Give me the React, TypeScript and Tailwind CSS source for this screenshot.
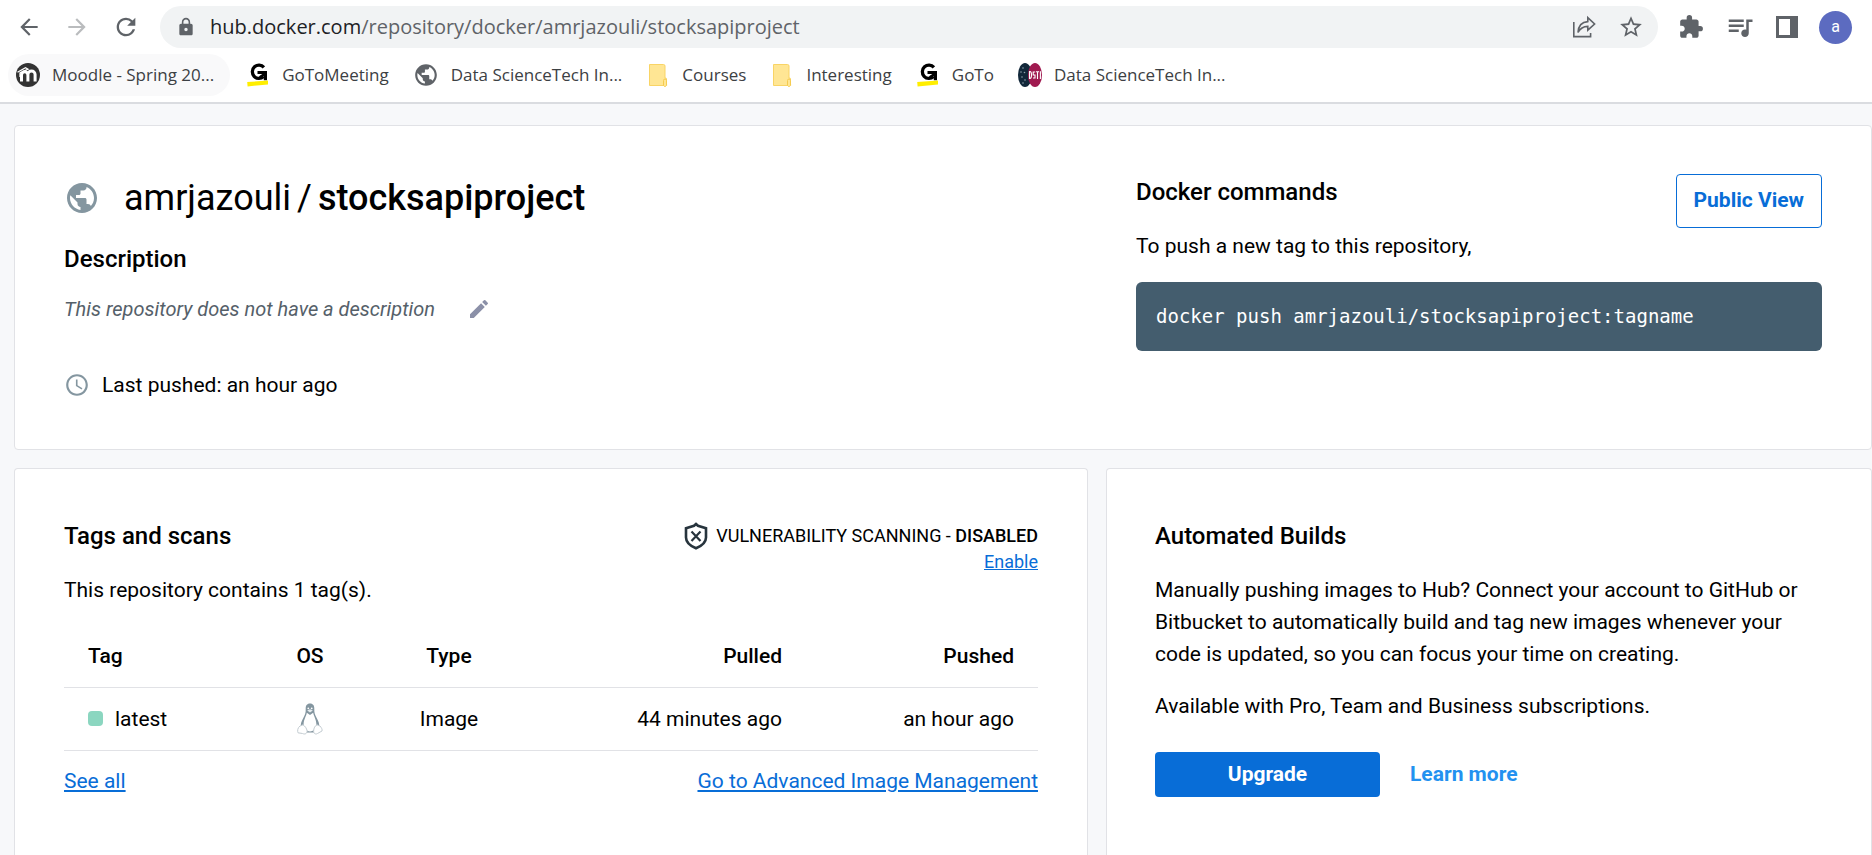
import type { ReactNode } from "react";
import {
  MdArrowBack,
  MdArrowForward,
  MdRefresh,
  MdLock,
  MdStarOutline,
  MdExtension,
  MdQueueMusic,
  MdPublic,
  MdEdit,
  MdAccessTime,
} from "react-icons/md";

function MoodleIcon() {
  return (
    <svg width="24" height="24" viewBox="0 0 24 24" aria-hidden="true">
      <circle cx="12" cy="12" r="12" fill="#333" />
      <path d="M1.500 9.200 L9.500 4.800 L12 6.200 L4 10 V14" fill="none" stroke="#fff" strokeWidth="1.300" />
      <path
        d="M5.500 18.500 V12 a3.200 3.200 0 0 1 6.400 0 V18.500 M11.900 18.500 V11.500 a3.600 3.600 0 0 1 7.200 0 V18.500"
        fill="none"
        stroke="#fff"
        strokeWidth="3"
      />
    </svg>
  );
}

function GotoIcon() {
  return (
    <svg width="24" height="24" viewBox="0 0 24 24" aria-hidden="true">
      <path
        d="M17.900 4.300 A6.600 6.700 0 1 0 17.500 13.600"
        fill="none"
        stroke="#000"
        strokeWidth="3.300"
      />
      <path d="M11.500 8 H21 V17.200 H17.800 V13.200 L14.500 15.500 L13 13.300 L16.300 11 H11.500 Z" fill="#000" />
      <path d="M1.200 19 L22 17.600 V21.400 L1.600 23.400 Z" fill="#ffee00" />
    </svg>
  );
}

function FolderIcon() {
  return (
    <svg width="24" height="24" viewBox="0 0 24 24" aria-hidden="true">
      <path d="M3.500 1.500 H17.500 a1.500 1.500 0 0 1 1.500 1.500 V15 H19.500 a1 1 0 0 1 1 1 V21 a1.500 1.500 0 0 1-1.500 1.500 H3.500 Z" fill="#ffe694" stroke="#f9d465" />
      <path d="M17.500 22.500 V17.500 a1.500 1.500 0 0 1 3 0 V21 a1.500 1.500 0 0 1-3 1.500 Z" fill="#ffe694" stroke="#f5cb4f" />
    </svg>
  );
}

function DstiIcon() {
  return (
    <svg width="24" height="24" viewBox="0 0 24 24" aria-hidden="true">
      <ellipse cx="7" cy="12" rx="7" ry="12" fill="#12283a" />
      <g fill="#8fa3ad">
        <circle cx="5" cy="5" r="0.8" />
        <circle cx="3" cy="9" r="0.8" />
        <circle cx="6.500" cy="9.500" r="0.8" />
        <circle cx="4" cy="14" r="0.8" />
        <circle cx="7" cy="17" r="0.8" />
        <circle cx="5" cy="20" r="0.8" />
      </g>
      <ellipse cx="17" cy="12" rx="7" ry="12" fill="#a01a50" />
      <g fill="none" stroke="#fff" strokeWidth="1.100">
        <path d="M11.500 8.500 V15.500 H12 C14 15.500 14 8.500 12 8.500 Z" />
        <path d="M17.200 9 H15.200 V12 H17 V15 H15" />
        <path d="M18 8.800 H21 M19.500 8.800 V16" />
        <path d="M22.400 8.300 V16" />
      </g>
    </svg>
  );
}

function ShareIcon() {
  return (
    <svg width="24" height="24" viewBox="0 0 24 24" fill="none" stroke="#5f6368" strokeWidth="1.600" aria-hidden="true">
      <path d="M1.800 7 V21.600 H18.600 V18" />
      <path d="M6 17.500 C6.400 11 9.500 7 15.800 6.600 V2.600 L22.600 9 L15.800 15.200 V11.400 C11.500 11.400 8.300 13 6 17.500 Z" />
    </svg>
  );
}

function SidePanelIcon() {
  return (
    <svg width="22" height="22" viewBox="0 0 22 22" aria-hidden="true">
      <path d="M0 0 H22 V22 H0 Z M3 3 V19 H14 V3 Z" fill="#5f6368" fillRule="evenodd" />
    </svg>
  );
}

function ShieldIcon() {
  return (
    <svg width="24" height="28" viewBox="0 0 24 28" fill="none" stroke="#27343d" aria-hidden="true">
      <path d="M12 2 L14 3.800 L22 6.200 V15.500 C22 20.500 17.500 24 12 26.300 C6.500 24 2 20.500 2 15.500 V6.200 L10 3.800 Z" strokeWidth="2.600" />
      <path d="M7.500 9.500 L16.500 19 M16.500 9.500 L7.500 19" strokeWidth="2.200" />
    </svg>
  );
}

function LinuxIcon() {
  return (
    <svg width="26" height="32" viewBox="0 0 26 32" aria-label="Linux" role="img">
      <path
        d="M13 0.500 C9.800 0.500 8.600 2.800 8.700 6 C8.800 9.500 8.300 11.500 6.300 15 C4.300 18.500 3.600 20.500 3.800 23.500 L9 29.500 H17 L22.200 23.500 C22.400 20.500 21.700 18.500 19.700 15 C17.700 11.500 17.200 9.500 17.300 6 C17.400 2.800 16.200 0.500 13 0.500 Z"
        fill="#8496a0"
      />
      <path d="M9.800 9.800 L13 12 L16.200 9.800 C16.600 13 19.400 16.500 19.400 21.500 C19.400 26 17 28.200 13 28.400 C9 28.200 6.600 26 6.600 21.500 C6.600 16.500 9.400 13 9.800 9.800 Z" fill="#fff" />
      <path d="M10.200 7.600 L13 6.200 L15.800 7.600 L13 9.600 Z" fill="#e7ecee" />
      <circle cx="11.300" cy="5.300" r="0.900" fill="#fff" />
      <circle cx="14.700" cy="5.300" r="0.900" fill="#fff" />
      <path d="M3 23 L6 21.800 C8 23.200 9.500 25 10.200 28 C10 31 7.500 31.500 5.500 30.500 L1 29.800 C0.300 28 0.500 24.800 3 23 Z" fill="#fff" stroke="#c3ccd1" />
      <path d="M23 23 L20 21.800 C18 22.700 16.800 25 16.600 28 C16.500 31 19 31.500 20.500 30.500 L25 28 C25.500 26.500 24.500 24.800 23 23 Z" fill="#fff" stroke="#c3ccd1" />
    </svg>
  );
}

function Bookmark({ icon, label, active }: { icon: ReactNode; label: string; active?: boolean }) {
  return (
    <a
      href="#"
      className={
        active
          ? "flex h-[42px] items-center gap-3 rounded-full bg-[#f9f9fa] pr-4 pl-2 whitespace-nowrap"
          : "flex h-[42px] items-center gap-3 rounded-full px-2 whitespace-nowrap"
      }
    >
      {icon}
      {label}
    </a>
  );
}

function BrowserChrome() {
  return (
    <header className="border-b-2 border-[#dadce0] bg-white font-['Open_Sans',sans-serif] text-[#5f6368]">
      <div className="flex items-center gap-5 pt-[6px] pr-5 pl-4">
        <nav className="flex shrink-0 items-center gap-[22px]" aria-label="History">
          <button type="button" aria-label="Back"><MdArrowBack size={26} /></button>
          <button type="button" aria-label="Forward" className="text-[#babcbe]"><MdArrowForward size={26} /></button>
          <button type="button" aria-label="Reload"><MdRefresh size={28} /></button>
        </nav>
        <div className="flex h-[42px] min-w-0 grow items-center gap-[14px] rounded-full bg-[#f1f3f4] pr-[14px] pl-4">
          <MdLock size={20} className="shrink-0" />
          <p className="grow truncate text-xl">
            <span className="text-[#202124]">hub.docker.com</span>/repository/docker/amrjazouli/stocksapiproject
          </p>
          <button type="button" aria-label="Share"><ShareIcon /></button>
          <button type="button" aria-label="Bookmark this page" className="ml-2"><MdStarOutline size={26} /></button>
        </div>
        <div className="flex shrink-0 items-center gap-[21px]">
          <button type="button" aria-label="Extensions"><MdExtension size={26} /></button>
          <button type="button" aria-label="Media control"><MdQueueMusic size={30} /></button>
          <button type="button" aria-label="Side panel"><SidePanelIcon /></button>
          <button type="button" className="size-[33px] rounded-full bg-[#5c6bc0] font-[Roboto,sans-serif] text-base text-white">a</button>
        </div>
      </div>
      <nav className="flex items-center gap-2 px-2 py-[6px] text-[17px] text-[#3c4043]" aria-label="Bookmarks">
        <Bookmark icon={<MoodleIcon />} label="Moodle - Spring 20..." active />
        <Bookmark icon={<GotoIcon />} label="GoToMeeting" />
        <Bookmark icon={<MdPublic size={26} color="#5f6368" />} label="Data ScienceTech In..." />
        <Bookmark icon={<FolderIcon />} label="Courses" />
        <Bookmark icon={<FolderIcon />} label="Interesting" />
        <Bookmark icon={<GotoIcon />} label="GoTo" />
        <Bookmark icon={<DstiIcon />} label="Data ScienceTech In..." />
      </nav>
    </header>
  );
}

function RepositoryCard() {
  return (
    <section className="flex justify-between rounded border border-[#e1e2e6] bg-white px-[49px] pt-12 pb-[50px]">
      <div className="pt-[3px]">
        <h1 className="flex items-center gap-6 text-4xl leading-[42px]">
          <MdPublic size={36} color="#8496a0" />
          <span className="flex gap-[6px]">
            <span>amrjazouli</span>
            <span>/</span>
            <span className="font-medium">stocksapiproject</span>
          </span>
        </h1>
        <h2 className="mt-6 text-2xl font-medium">Description</h2>
        <div className="mt-5 flex items-center gap-8">
          <p className="text-xl text-[#556069] italic">This repository does not have a description</p>
          <button type="button" aria-label="Edit description"><MdEdit size={24} color="#8b90a8" /></button>
        </div>
        <p className="mt-12 flex items-center gap-3 text-[21px] leading-7">
          <MdAccessTime size={26} color="#8496a0" />
          Last pushed: an hour ago
        </p>
      </div>
      <div className="w-[686px]">
        <div className="flex items-start justify-between">
          <div className="pt-[2px]">
            <h2 className="text-2xl font-medium">Docker commands</h2>
            <p className="mt-6 text-[21px] leading-7">To push a new tag to this repository,</p>
          </div>
          <button type="button" className="h-[54px] rounded border border-[#086dd7] px-[17px] text-[21px] font-bold text-[#086dd7]">
            Public View
          </button>
        </div>
        <pre className="mt-[22px] rounded-md bg-[#445d6e] px-5 py-5 font-['DejaVu_Sans_Mono',monospace] text-[19px] leading-[29px] text-white">
          docker push amrjazouli/stocksapiproject:tagname
        </pre>
      </div>
    </section>
  );
}

function TagsCard() {
  return (
    <section className="rounded-t border border-b-0 border-[#e1e2e6] bg-white px-[49px] pt-[51px]">
      <div className="flex justify-between">
        <div>
          <h2 className="text-2xl font-medium">Tags and scans</h2>
          <p className="mt-6 text-[21px] leading-7">This repository contains 1 tag(s).</p>
        </div>
        <div className="pt-[2px] text-right text-lg leading-6">
          <p className="flex items-center gap-2">
            <ShieldIcon />
            <span>VULNERABILITY SCANNING - <span className="font-medium">DISABLED</span></span>
          </p>
          <a href="#" className="block text-[#086dd7] underline">Enable</a>
        </div>
      </div>
      <table className="mt-[21px] w-full text-[21px] leading-7">
        <thead>
          <tr className="h-[62px] border-b border-[#e1e2e6]">
            <th className="w-[190px] px-6 text-left font-medium">Tag</th>
            <th className="w-[112px] font-medium">OS</th>
            <th className="w-[166px] font-medium">Type</th>
            <th className="px-6 text-right font-medium">Pulled</th>
            <th className="w-[232px] px-6 text-right font-medium">Pushed</th>
          </tr>
        </thead>
        <tbody>
          <tr className="h-[63px] border-b border-[#e1e2e6]">
            <td className="px-6">
              <span className="flex items-center gap-3">
                <span className="size-[15px] rounded bg-[#8bd6c0]" />
                latest
              </span>
            </td>
            <td><span className="flex justify-center"><LinuxIcon /></span></td>
            <td className="text-center">Image</td>
            <td className="px-6 text-right">44 minutes ago</td>
            <td className="px-6 text-right">an hour ago</td>
          </tr>
        </tbody>
      </table>
      <div className="mt-4 flex justify-between text-[21px] leading-7 text-[#086dd7]">
        <a href="#" className="underline">See all</a>
        <a href="#" className="underline">Go to Advanced Image Management</a>
      </div>
    </section>
  );
}

function BuildsCard() {
  return (
    <section className="rounded-t border border-b-0 border-[#e1e2e6] bg-white px-12 pt-[51px]">
      <h2 className="text-2xl font-medium">Automated Builds</h2>
      <p className="mt-[22px] text-[21px] leading-8">
        Manually pushing images to Hub? Connect your account to GitHub or Bitbucket to automatically build and tag new
        images whenever your code is updated, so you can focus your time on creating.
      </p>
      <p className="mt-5 text-[21px] leading-8">Available with Pro, Team and Business subscriptions.</p>
      <div className="mt-[30px] flex items-center gap-[30px] text-[21px] font-bold">
        <button type="button" className="h-[45px] w-[225px] rounded bg-[#086dd7] text-white">Upgrade</button>
        <a href="#" className="text-[#2391f0]">Learn more</a>
      </div>
    </section>
  );
}

export default function App() {
  return (
    <div className="flex min-h-screen flex-col bg-[#f7f8fa]">
      <BrowserChrome />
      <main className="flex grow flex-col gap-[18px] pt-[21px] pl-[14px] font-[Roboto,sans-serif] text-black">
        <RepositoryCard />
        <div className="grid grow grid-cols-[1074px_1fr] gap-[18px]">
          <TagsCard />
          <BuildsCard />
        </div>
      </main>
    </div>
  );
}
